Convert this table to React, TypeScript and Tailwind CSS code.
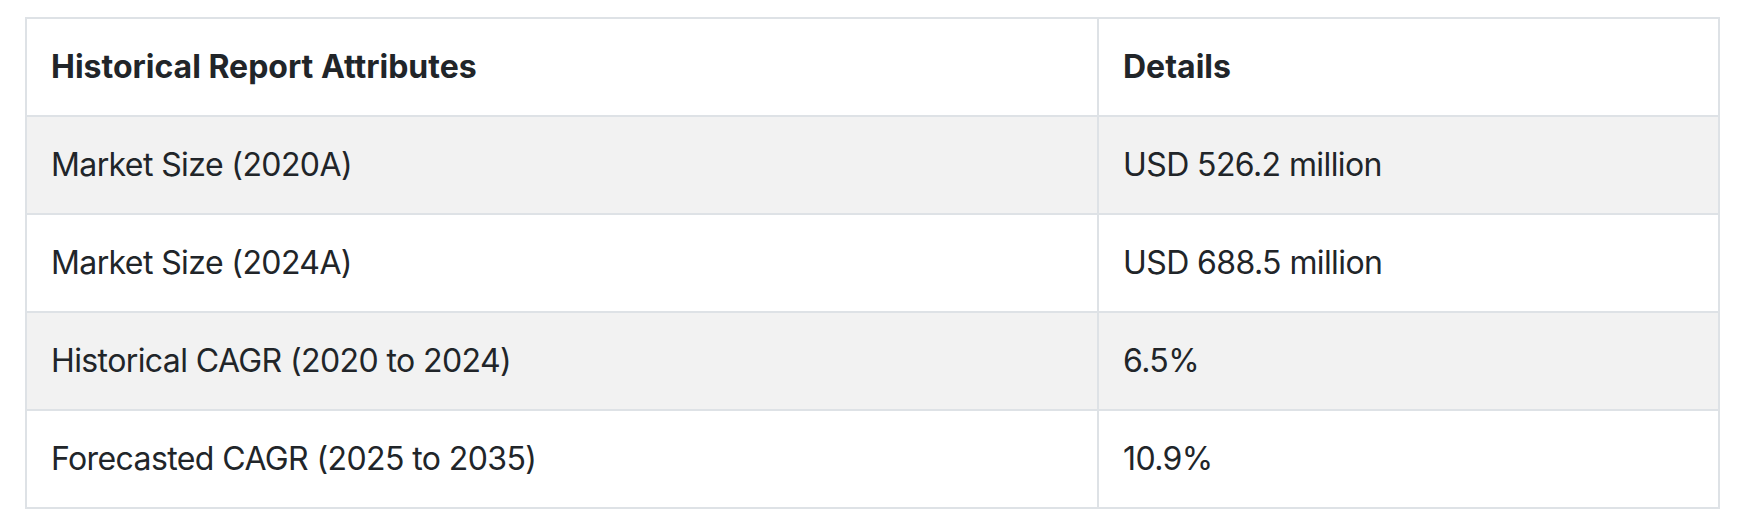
import React from "react";

const rows: [string, string][] = [
  ["Market Size (2020A)", "USD 526.2 million"],
  ["Market Size (2024A)", "USD 688.5 million"],
  ["Historical CAGR (2020 to 2024)", "6.5%"],
  ["Forecasted CAGR (2025 to 2035)", "10.9%"],
];

export default function App() {
  return (
    <div className="w-[1748px] h-[530px] bg-white pt-[17px] pl-[25px]" style={{ fontFamily: "Inter, 'Noto Sans', sans-serif" }}>
      <div className="w-[1695px] border-2 border-[#dee2e6] grid grid-cols-[1072px_1fr] text-[32px] leading-[48px] text-[#212529]">
        <div className="border-r-2 border-b-2 border-[#dee2e6] px-6 py-6 font-bold bg-white">Historical Report Attributes</div>
        <div className="border-b-2 border-[#dee2e6] px-6 py-6 font-bold bg-white">Details</div>
        {rows.map(([a, b], i) => {
          const last = i === rows.length - 1;
          const bg = i % 2 === 0 ? "bg-[#f2f2f2]" : "bg-white";
          return (
            <React.Fragment key={a}>
              <div className={`border-r-2 border-[#dee2e6] px-6 py-6 tracking-[-0.6px] ${last ? "" : "border-b-2"} ${bg}`}>{a}</div>
              <div className={`border-[#dee2e6] px-6 py-6 tracking-[-0.6px] ${last ? "" : "border-b-2"} ${bg}`}>{b}</div>
            </React.Fragment>
          );
        })}
      </div>
    </div>
  );
}
